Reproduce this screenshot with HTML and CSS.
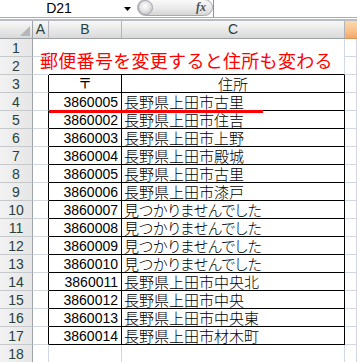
FILE: index.html
```html
<!DOCTYPE html>
<html lang="ja">
<head>
    <meta charset="UTF-8">
    <meta name="viewport" content="width=device-width, initial-scale=1.0">
    <title>郵便番号</title>
    <link rel="stylesheet" href="styles.css">
</head>
<body>
  <div class="formula-bar">
    <div class="name-box">
      <span class="ref">D21</span>
      <span class="drop"><svg width="7" height="4" viewBox="0 0 7 4"><path d="M0 0H7L3.5 4Z" fill="#000"/></svg></span>
    </div>
    <div class="fx-btn"><span class="knob"></span><i>fx</i></div>
    <div class="formula-input"></div>
  </div>
  <div class="gap"></div>

  <div class="sheet">
    <div class="hd corner"></div>
    <div class="hd">A</div>
    <div class="hd">B</div>
    <div class="hd">C</div>
    <div class="hd active"></div>

    <div class="title"><span>郵便番号を変更すると住所も変わる</span></div>

    <div class="rh">1</div><div class="c open"></div><div class="c"></div>
    <div class="rh">2</div><div class="c open"></div><div class="c"></div>

    <div class="rh">3</div><div class="c edge"></div><div class="c t ctr">〒</div><div class="c t ctr jp">住所</div><div class="c"></div>
    <div class="rh">4</div><div class="c edge"></div><div class="c t num">3860005</div><div class="c t jp">長野県上田市古里</div><div class="c"></div>
    <div class="rh">5</div><div class="c edge"></div><div class="c t num">3860002</div><div class="c t jp">長野県上田市住吉</div><div class="c"></div>
    <div class="rh">6</div><div class="c edge"></div><div class="c t num">3860003</div><div class="c t jp">長野県上田市上野</div><div class="c"></div>
    <div class="rh">7</div><div class="c edge"></div><div class="c t num">3860004</div><div class="c t jp">長野県上田市殿城</div><div class="c"></div>
    <div class="rh">8</div><div class="c edge"></div><div class="c t num">3860005</div><div class="c t jp">長野県上田市古里</div><div class="c"></div>
    <div class="rh">9</div><div class="c edge"></div><div class="c t num">3860006</div><div class="c t jp">長野県上田市漆戸</div><div class="c"></div>
    <div class="rh">10</div><div class="c edge"></div><div class="c t num">3860007</div><div class="c t jp">見つかりませんでした</div><div class="c"></div>
    <div class="rh">11</div><div class="c edge"></div><div class="c t num">3860008</div><div class="c t jp">見つかりませんでした</div><div class="c"></div>
    <div class="rh">12</div><div class="c edge"></div><div class="c t num">3860009</div><div class="c t jp">見つかりませんでした</div><div class="c"></div>
    <div class="rh">13</div><div class="c edge"></div><div class="c t num">3860010</div><div class="c t jp">見つかりませんでした</div><div class="c"></div>
    <div class="rh">14</div><div class="c edge"></div><div class="c t num">3860011</div><div class="c t jp">長野県上田市中央北</div><div class="c"></div>
    <div class="rh">15</div><div class="c edge"></div><div class="c t num">3860012</div><div class="c t jp">長野県上田市中央</div><div class="c"></div>
    <div class="rh">16</div><div class="c edge"></div><div class="c t num">3860013</div><div class="c t jp">長野県上田市中央東</div><div class="c"></div>
    <div class="rh">17</div><div class="c edge"></div><div class="c t num">3860014</div><div class="c t jp">長野県上田市材木町</div><div class="c"></div>
    <div class="rh">18</div><div class="c"></div><div class="c"></div><div class="c"></div><div class="c"></div>

    <div class="mark"></div>
  </div>
</body>
</html>
```

FILE: styles.css
```css
*{
    margin: 0;
    padding: 0;
    box-sizing: border-box;
}
body{
    width: 357px;
    height: 362px;
    overflow: hidden;
    background: #fff;
    font-family: "Liberation Sans", "Noto Sans CJK JP", sans-serif;
    color: #000;
}

/* formula bar */
.formula-bar{
    display: flex;
    height: 18px;
    border-bottom: 1px solid #a9acb2;
}
.name-box{
    width: 137px;
    display: flex;
    align-items: center;
}
.name-box .ref{
    width: 118px;
    text-align: center;
    font-size: 14px;
    line-height: 17px;
}
.name-box .drop{
    width: 19px;
    display: flex;
    justify-content: center;
    align-items: center;
}
.fx-btn{
    width: 76px;
    height: 17px;
    margin-top: -1px;
    display: flex;
    align-items: center;
    justify-content: space-between;
    border: 1px solid #a5a8ad;
    border-radius: 9px;
    background: linear-gradient(#fafafa, #e9e9e9 55%, #d6d6d6);
}
.fx-btn .knob{
    width: 15px;
    height: 15px;
    border-radius: 50%;
    border: 1px solid #a0a3a8;
    background: radial-gradient(circle at 45% 40%, #fff, #e4e4e4 45%, #b9bbbe);
}
.fx-btn i{
    font-family: "Liberation Serif", serif;
    font-weight: bold;
    font-size: 12px;
    color: #505050;
    padding-right: 6px;
}
.formula-input{
    flex: 1;
    border-left: 1px solid #8e9399;
}
.gap{
    height: 3px;
    border-bottom: 2px solid #b8bcc3;
}

/* sheet */
.sheet{
    position: relative;
    display: grid;
    grid-template-columns: 33px 16px 73px 223px 12px;
    grid-auto-rows: 18px;
}
.hd{
    background: linear-gradient(#f8f8f8, #e8e8e8 55%, #d9d9d9);
    border-right: 1px solid #b1b5ba;
    border-bottom: 1px solid #9ea3a8;
    color: #27413e;
    font-size: 14px;
    line-height: 17px;
    text-align: center;
}
.hd.corner{
    position: relative;
    border-right-color: #9ea3a8;
}
.hd.corner::after{
    content: "";
    position: absolute;
    right: 2px;
    bottom: 2px;
    border-left: 10px solid transparent;
    border-bottom: 10px solid #b4b6b9;
}
.hd.active{
    background: linear-gradient(#fbd9b0, #f8c28c 55%, #f2a869);
    border-right: none;
    border-bottom-color: #d5965c;
}
.rh{
    background: linear-gradient(90deg, #f2f2f2, #e6e6e6);
    border-right: 1px solid #9ea3a8;
    border-bottom: 1px solid #c6c9cc;
    color: #27413e;
    font-size: 14px;
    line-height: 18px;
    text-align: center;
}
.c{
    border-right: 1px solid #d0d7e5;
    border-bottom: 1px solid #d0d7e5;
    font-size: 14px;
    line-height: 17px;
    white-space: nowrap;
}
.c.open{
    border-right-color: transparent;
}
.c.edge{
    border-right-color: #000;
}
.t{
    border-right-color: #000;
    border-bottom-color: #000;
    padding: 0 3px;
}
.num{
    text-align: right;
    padding-top: 1px;
}
.ctr{
    text-align: center;
}
.jp{
    font-family: "Noto Sans CJK JP", sans-serif;
    font-size: 15px;
    font-weight: 300;
    line-height: 17px;
    font-feature-settings: "palt";
    padding-left: 2px;
}
.ctr.jp{
    padding-left: 3px;
}
.title{
    grid-column: 3 / 5;
    grid-row: 2 / 4;
    border-right: 1px solid #d0d7e5;
    border-bottom: 1px solid #000;
    padding-top: 11px;
    white-space: nowrap;
}
.title span{
    display: block;
    margin-left: -9px;
    font-family: "Noto Sans CJK JP", sans-serif;
    font-size: 18px;
    line-height: 20px;
    letter-spacing: 0.3px;
    color: #f00;
}
.mark{
    position: absolute;
    left: 49px;
    top: 89px;
    width: 214px;
    height: 3px;
    background: #f00;
}
```
